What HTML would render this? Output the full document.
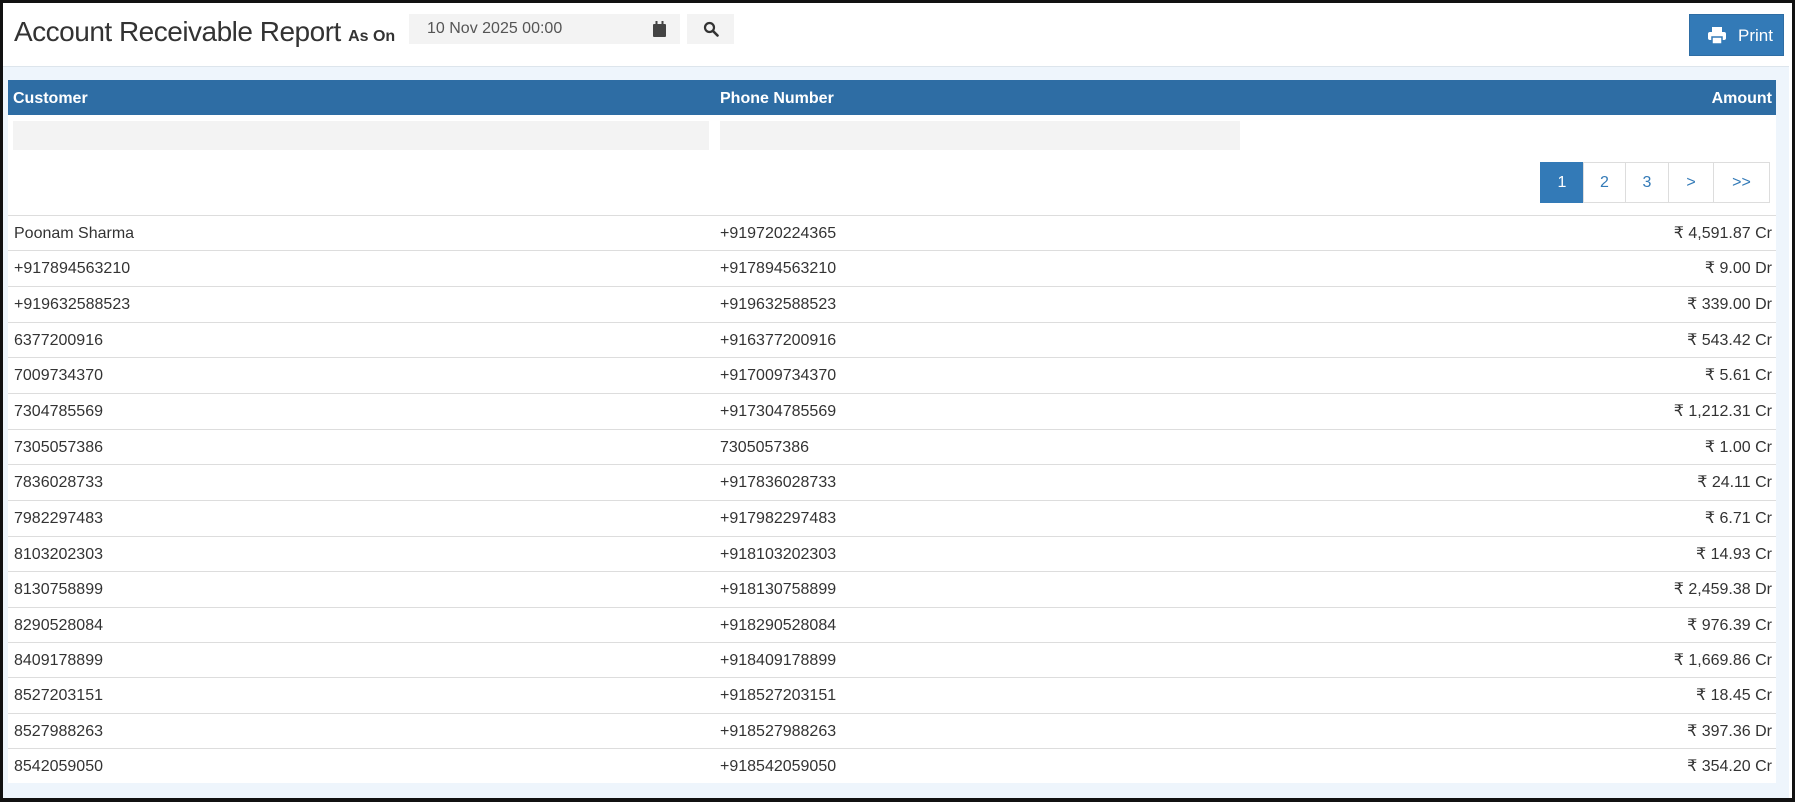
<!DOCTYPE html>
<html><head><meta charset="utf-8"><style>
*{box-sizing:border-box;margin:0;padding:0}
body{width:1795px;height:802px;background:#fff;font-family:"Liberation Sans",sans-serif;color:#333;position:relative;overflow:hidden}
.frame{position:absolute;left:0;top:0;width:1795px;height:802px;border:3px solid #111;border-bottom-width:4px}
.title{position:absolute;left:14px;top:16px;font-size:28px;color:#333;letter-spacing:-0.5px}
.title b{font-size:16px;letter-spacing:0}
.date{position:absolute;left:409px;top:14px;width:271px;height:30px;background:#f3f3f3;font-size:16px;color:#555;padding:6px 18px}
.search{position:absolute;left:687px;top:14px;width:47px;height:30px;background:#f3f3f3}
.print{position:absolute;left:1689px;top:14px;width:95px;height:42px;background:#337ab7;border:1px solid #2e6da4;color:#fff;font-size:17px;padding:11px 0 0 48px}
.band{position:absolute;left:3px;top:66px;width:1786px;height:732px;background:#eef5fc;border-top:1px solid #dde5ec}
.tbl{position:absolute;left:8px;top:80px;width:1768px;height:703px;background:#fff}
.hd{height:35px;background:#2e6da4;color:#fff;font-weight:bold;font-size:16px;position:relative}
.hd span{position:absolute;top:9px;line-height:20px}
.f{position:absolute;top:41px;height:29px;background:#f3f3f3}
.pg{position:absolute;top:82px;height:41px;border:1px solid #ddd;color:#337ab7;font-size:16px;text-align:center;line-height:39px}
.row{position:absolute;left:0;width:1768px;height:36px;border-top:1px solid #ddd;font-size:16px}
.row span{position:absolute;top:8px;line-height:20px;height:20px}
</style></head><body>
<div class="band"></div>
<div class="title">Account Receivable Report <b>As On</b></div>
<div class="date">10 Nov 2025 00:00
<svg style="position:absolute;right:14px;top:7px" width="13" height="16" viewBox="0 0 13 16"><rect x="0" y="3" width="13" height="13" rx="1" fill="#444"/><rect x="2.5" y="0" width="2" height="4" fill="#444"/><rect x="8.5" y="0" width="2" height="4" fill="#444"/></svg></div>
<div class="search"><svg style="position:absolute;left:16px;top:7px" width="16" height="16" viewBox="0 0 16 16"><circle cx="6.5" cy="6.5" r="4.5" fill="none" stroke="#333" stroke-width="2.2"/><line x1="10" y1="10" x2="14.5" y2="14.5" stroke="#333" stroke-width="2.6" stroke-linecap="round"/></svg></div>
<div class="print"><svg style="position:absolute;left:18px;top:12px" width="18" height="17" viewBox="0 0 18 17"><rect x="4" y="0" width="10" height="5" fill="#fff"/><rect x="0" y="5" width="18" height="8" rx="2" fill="#fff"/><rect x="4" y="10" width="10" height="7" fill="#fff" stroke="#337ab7" stroke-width="1.5"/></svg>Print</div>
<div class="tbl">
<div class="hd"><span style="left:5px">Customer</span><span style="left:712px">Phone Number</span><span style="right:4px">Amount</span></div>
<div class="f" style="left:5px;width:696px"></div>
<div class="f" style="left:712px;width:520px"></div>
<div class="pg" style="left:1532px;width:44px;background:#337ab7;border-color:#337ab7;color:#fff">1</div>
<div class="pg" style="left:1575px;width:43px">2</div>
<div class="pg" style="left:1617px;width:44px">3</div>
<div class="pg" style="left:1660px;width:46px">&gt;</div>
<div class="pg" style="left:1705px;width:57px">&gt;&gt;</div>
<div class="row" style="top:135px"><span style="left:6px">Poonam Sharma</span><span style="left:712px">+919720224365</span><span style="right:4px">₹ 4,591.87 Cr</span></div>
<div class="row" style="top:170px"><span style="left:6px">+917894563210</span><span style="left:712px">+917894563210</span><span style="right:4px">₹ 9.00 Dr</span></div>
<div class="row" style="top:206px"><span style="left:6px">+919632588523</span><span style="left:712px">+919632588523</span><span style="right:4px">₹ 339.00 Dr</span></div>
<div class="row" style="top:242px"><span style="left:6px">6377200916</span><span style="left:712px">+916377200916</span><span style="right:4px">₹ 543.42 Cr</span></div>
<div class="row" style="top:277px"><span style="left:6px">7009734370</span><span style="left:712px">+917009734370</span><span style="right:4px">₹ 5.61 Cr</span></div>
<div class="row" style="top:313px"><span style="left:6px">7304785569</span><span style="left:712px">+917304785569</span><span style="right:4px">₹ 1,212.31 Cr</span></div>
<div class="row" style="top:349px"><span style="left:6px">7305057386</span><span style="left:712px">7305057386</span><span style="right:4px">₹ 1.00 Cr</span></div>
<div class="row" style="top:384px"><span style="left:6px">7836028733</span><span style="left:712px">+917836028733</span><span style="right:4px">₹ 24.11 Cr</span></div>
<div class="row" style="top:420px"><span style="left:6px">7982297483</span><span style="left:712px">+917982297483</span><span style="right:4px">₹ 6.71 Cr</span></div>
<div class="row" style="top:456px"><span style="left:6px">8103202303</span><span style="left:712px">+918103202303</span><span style="right:4px">₹ 14.93 Cr</span></div>
<div class="row" style="top:491px"><span style="left:6px">8130758899</span><span style="left:712px">+918130758899</span><span style="right:4px">₹ 2,459.38 Dr</span></div>
<div class="row" style="top:527px"><span style="left:6px">8290528084</span><span style="left:712px">+918290528084</span><span style="right:4px">₹ 976.39 Cr</span></div>
<div class="row" style="top:562px"><span style="left:6px">8409178899</span><span style="left:712px">+918409178899</span><span style="right:4px">₹ 1,669.86 Cr</span></div>
<div class="row" style="top:597px"><span style="left:6px">8527203151</span><span style="left:712px">+918527203151</span><span style="right:4px">₹ 18.45 Cr</span></div>
<div class="row" style="top:633px"><span style="left:6px">8527988263</span><span style="left:712px">+918527988263</span><span style="right:4px">₹ 397.36 Dr</span></div>
<div class="row" style="top:668px"><span style="left:6px">8542059050</span><span style="left:712px">+918542059050</span><span style="right:4px">₹ 354.20 Cr</span></div>
</div>
<div class="frame"></div>
</body></html>
